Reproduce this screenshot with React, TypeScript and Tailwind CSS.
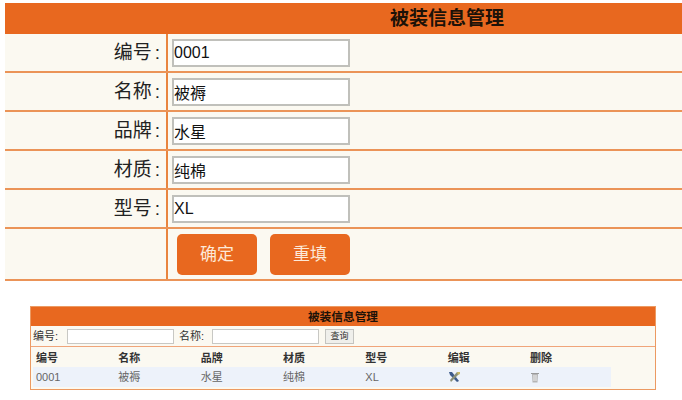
import React from 'react';

const cjk = "font-['Liberation_Sans','Noto_Sans_CJK_SC',sans-serif]";

const fields = [
  { label: '编号', value: '0001' },
  { label: '名称', value: '被褥' },
  { label: '品牌', value: '水星' },
  { label: '材质', value: '纯棉' },
  { label: '型号', value: 'XL' },
];

const columns = ['编号', '名称', '品牌', '材质', '型号', '编辑', '删除'];
const cells = ['0001', '被褥', '水星', '纯棉', 'XL'];

const EditIcon = () => (
  <svg width="13" height="12" viewBox="0 0 13 12">
    <path d="M1 1 L4 1 L11 10 L9 11 L2 4 Z" fill="#3d5a8a" />
    <path d="M12 1 L9 1 L2 9 L3 11 L10 4 Z" fill="#8a8f78" />
    <path d="M9 1 L12 1 L12 3 L10 4 Z" fill="#c9b765" />
  </svg>
);

const TrashIcon = () => (
  <svg width="10" height="12" viewBox="0 0 10 12">
    <path d="M1 2 H9 V3 H1 Z" fill="#9a9a9a" />
    <path d="M2 3 H8 L7.5 11.5 H2.5 Z" fill="#b5b5b5" />
    <path d="M4 4 V10 M6 4 V10" stroke="#f0f0f0" strokeWidth="1" />
  </svg>
);

export default function App() {
  return (
    <div className={`w-[682px] h-[400px] overflow-hidden bg-white ${cjk}`}>
      {/* Formulario principal */}
      <div className="pt-[3px] pl-[5px]">
        <div className="h-[31px] bg-[#e8681f] flex items-center">
          <div className="w-[162px]" />
          <h1 className="ml-[223px] text-[19px] leading-none font-bold text-[#1c1208]">被装信息管理</h1>
        </div>
        {fields.map((f) => (
          <div key={f.label} className="h-[39px] flex bg-[#fbf9f1] border-b-2 border-[#eb9458]">
            <div className="w-[161px] flex items-center justify-end pr-[6px] pt-[2px] text-[19px] text-[#222]">
              {f.label}
              <span className="ml-[3px]">:</span>
            </div>
            <div className="flex items-center pl-[4px] border-l-2 border-[#e9853f]">
              <input
                readOnly
                value={f.value}
                className="w-[178px] h-[28px] bg-white border-2 border-[#c0c0bb] pl-0 text-[16px] text-[#111] outline-none"
              />
            </div>
          </div>
        ))}
        <div className="h-[52px] flex bg-[#fbf9f1] border-b-2 border-[#eb9458]">
          <div className="w-[161px]" />
          <div className="flex gap-[13px] pl-[9px] pt-[5px] border-l-2 border-[#e9853f]">
            <button className="w-[80px] h-[41px] rounded-[5px] bg-[#e8681f] text-[17px] text-[#fde9d8]">确定</button>
            <button className="w-[80px] h-[41px] rounded-[5px] bg-[#e8681f] text-[17px] text-[#fde9d8]">重填</button>
          </div>
        </div>
      </div>

      {/* Vista previa de la lista */}
      <div className="mt-[25px] ml-[30px] w-[626px] h-[84px] border border-[#ec9a62] bg-[#fbf9f1]">
        <div className="h-[19px] bg-[#e8681f] flex items-center justify-center text-[11.7px] font-bold text-[#1c1208]">
          被装信息管理
        </div>
        <div className="h-[21px] flex items-center pl-[2px] text-[11px] text-[#333] border-b border-[#f0a57a]">
          <span className="w-[34px]">编号:</span>
          <input readOnly className="w-[107px] h-[15px] bg-white border border-[#c8c8c4]" />
          <span className="ml-[5px] w-[33px]">名称:</span>
          <input readOnly className="w-[107px] h-[15px] bg-white border border-[#c8c8c4]" />
          <button className="ml-[6px] w-[29px] h-[15px] bg-[#efefeb] border border-[#c4c4c0] text-[9px] text-[#333] leading-none">查询</button>
        </div>
        <div className="mt-[2px] ml-[5px] grid grid-cols-[repeat(7,82.33px)] h-[18px] items-center text-[11px] font-bold text-[#333]">
          {columns.map((c) => (
            <span key={c}>{c}</span>
          ))}
        </div>
        <div className="ml-[2px] w-[578px] pl-[3px] h-[20px] grid grid-cols-[repeat(7,82.33px)] items-center bg-[#edf2fa] text-[11px] text-[#666]">
          {cells.map((c) => (
            <span key={c}>{c}</span>
          ))}
          <span className="flex"><EditIcon /></span>
          <span className="flex"><TrashIcon /></span>
        </div>
      </div>
    </div>
  );
}
